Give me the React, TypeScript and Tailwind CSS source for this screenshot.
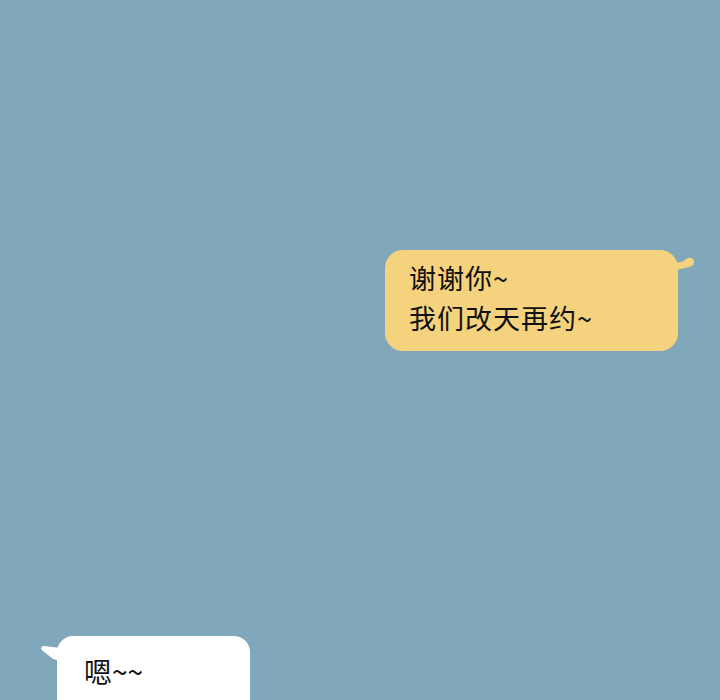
import React from "react";

export default function App() {
  return (
    <div
      className="w-[720px] h-[700px] overflow-hidden bg-[#80a7ba] flex flex-col"
      style={{ fontFamily: '"Noto Sans CJK SC", "Noto Sans", sans-serif' }}
    >
      <div className="relative shrink-0 ml-[385px] mt-[250px] w-[293px] h-[101px]">
        <div className="w-full h-full bg-[#f4d27e] rounded-[18px] pl-[24px] pt-[8px] text-[27px] leading-[40px] text-[#111] tracking-[1px]">
          <div>谢谢你~</div>
          <div>我们改天再约~</div>
        </div>
        <svg className="absolute left-[270px] top-[0px]" width="42" height="30" viewBox="0 0 42 30">
          <path d="M15 12 C22 14 27 12 30 10 C33 7 38 7 39 11 C40 15 36 17 30 18 C25 19 21 20 15 24 Z" fill="#f4d27e" />
        </svg>
      </div>
      <div className="relative shrink-0 ml-[57px] mt-[285px] w-[193px] h-[80px]">
        <svg className="absolute left-[-16px] top-[9px]" width="20" height="20" viewBox="0 0 20 20">
          <path d="M20 3 L3 1 C0 1 -1 4 2 6 L12 14 L20 16 Z" fill="#ffffff" />
        </svg>
        <div className="relative w-full h-full bg-white rounded-[16px] pl-[27px] pt-[15px] text-[28px] leading-[40px] text-[#111]">
          <div>嗯~~</div>
        </div>
      </div>
    </div>
  );
}
